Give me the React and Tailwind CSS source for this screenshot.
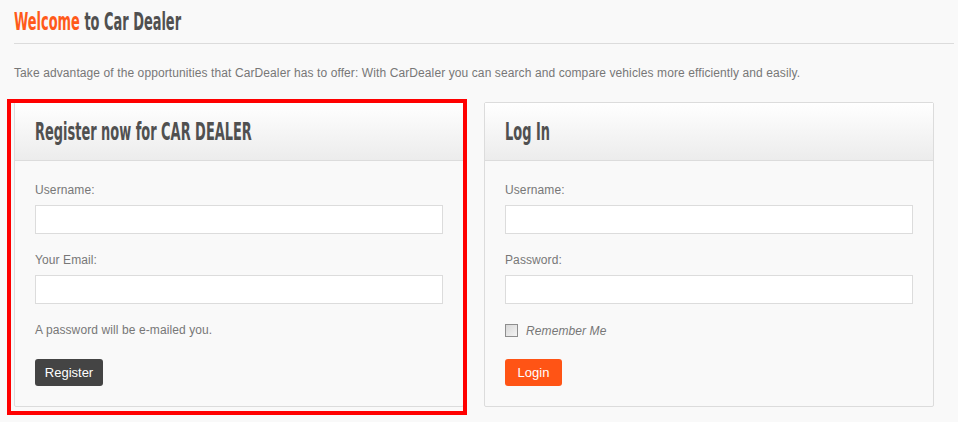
export default function App() {
  const head = { fontFamily: '"DejaVu Sans Condensed", "Liberation Sans Narrow", "Liberation Sans", sans-serif' };
  const body = { fontFamily: '"Liberation Sans", Arial, sans-serif' };
  return (
    <div className="w-[958px] h-[422px] bg-[#f9f9f9] overflow-hidden pl-[14px] pr-[4px]" style={body}>
      <div className="h-[44px] border-b border-[#dcdcdc] pt-[8px]">
        <h1 className="inline-block origin-left scale-x-[0.6] font-bold text-[24px] leading-[28px] text-[#505050] whitespace-nowrap" style={head}>
          <span className="text-[#ff5a1a]">Welcome</span> to Car Dealer
        </h1>
      </div>
      <p className="mt-[21px] text-[12px] leading-[16px] tracking-[0.1px] text-[#777]">
        Take advantage of the opportunities that CarDealer has to offer: With CarDealer you can search and compare vehicles more efficiently and easily.
      </p>
      <div className="mt-[21px] flex gap-[20px]">
        <div className="relative">
          <Card title="Register now for CAR DEALER" head={head}>
            <Label>Username:</Label>
            <Input />
            <div className="mt-[17px]"><Label>Your Email:</Label></div>
            <Input />
            <p className="mt-[17px] text-[12px] leading-[18px] tracking-[0.1px] text-[#777]">A password will be e-mailed you.</p>
            <button className="mt-[20px] w-[68px] h-[27px] rounded-[3px] bg-[#444] text-white text-[13px] leading-[27px] text-center">Register</button>
          </Card>
          <div className="absolute left-[-7px] top-[-3px] w-[460px] h-[316px] border-4 border-[#ff0000] pointer-events-none"></div>
        </div>
        <Card title="Log In" head={head}>
          <Label>Username:</Label>
          <Input />
          <div className="mt-[17px]"><Label>Password:</Label></div>
          <Input />
          <div className="mt-[20px] flex items-center h-[13px]">
            <span className="w-[13px] h-[13px] border border-[#8e8e8e] bg-gradient-to-br from-[#d8d8d8] to-[#f4f4f4] box-border"></span>
            <span className="ml-[8px] italic text-[12px] tracking-[0.1px] text-[#777]">Remember Me</span>
          </div>
          <button className="mt-[22px] w-[57px] h-[27px] rounded-[3px] bg-[#ff5415] text-white text-[13px] leading-[27px] text-center">Login</button>
        </Card>
      </div>
    </div>
  );
}

function Card({ title, head, children }) {
  return (
    <div className="w-[450px] h-[305px] border border-[#dcdcdc] rounded-[2px] bg-[#f9f9f9] box-border">
      <div className="h-[58px] border-b border-[#dcdcdc] bg-gradient-to-b from-white to-[#ececec] px-[20px] flex items-center">
        <h2 className="inline-block origin-left scale-x-[0.6] font-bold text-[24px] leading-[28px] text-[#505050] whitespace-nowrap" style={head}>{title}</h2>
      </div>
      <div className="px-[20px] pt-[20px]">{children}</div>
    </div>
  );
}

function Label({ children }) {
  return <div className="text-[12px] leading-[18px] tracking-[0.1px] text-[#777]">{children}</div>;
}

function Input() {
  return <div className="mt-[6px] w-[408px] h-[29px] border border-[#dcdcdc] bg-white box-border"></div>;
}
